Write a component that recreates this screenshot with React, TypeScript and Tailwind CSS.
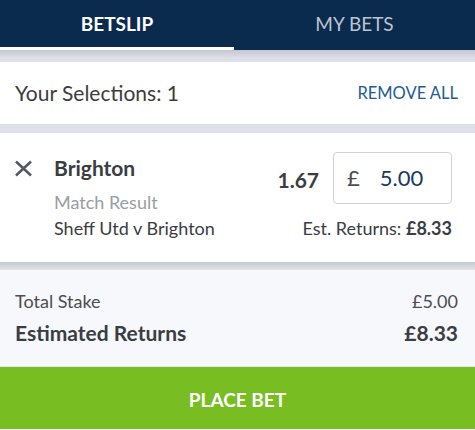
import React from "react";

export default function App() {
  return (
    <div className="w-[475px] h-[430px] overflow-hidden bg-white" style={{ fontFamily: "Lato, 'Noto Sans', sans-serif" }}>
      {/* Tabs */}
      <div className="flex h-[50px] bg-[#0a2a4e]">
        <div className="w-[234px] flex items-center justify-center border-b-[3px] border-white text-white font-bold text-[19px] leading-[24px]">
          BETSLIP
        </div>
        <div className="flex-1 flex items-center justify-center pb-[3px] text-[#bcc4d0] text-[19px] leading-[24px]">
          MY BETS
        </div>
      </div>
      <div className="h-[12px] bg-[linear-gradient(#c4c7d0,#dde0e8_70%,#dfe1ea)]" />
      {/* Selections header */}
      <div className="flex h-[62px] items-center justify-between pl-[15px] pr-[17px]">
        <span className="text-[21px] leading-[26px] text-[#3c3c3c]">Your Selections: 1</span>
        <span className="text-[16.5px] leading-[20px] text-[#1e5b96]">REMOVE ALL</span>
      </div>
      <div className="h-[9px] bg-[#dfe1ea]" />
      {/* Bet card */}
      <div className="flex h-[129px] items-start pt-[19px] pl-[14px] pr-[23px]">
        <div className="w-[40px] mt-[8px]">
          <svg width="19" height="17" viewBox="0 0 19 17">
            <path d="M2 1.5 L17 15.5 M17 1.5 L2 15.5" stroke="#555a60" strokeWidth="2.6" strokeLinecap="butt" />
          </svg>
        </div>
        <div className="flex-1 mt-[4px]">
          <div className="text-[21px] leading-[24px] font-bold text-[#3a3d42]">Brighton</div>
          <div className="mt-[9px] text-[18px] leading-[26px] text-[#9a9da2]">Match Result</div>
          <div className="text-[18px] leading-[26px] text-[#3a3d42]">Sheff Utd v Brighton</div>
        </div>
        <div className="flex flex-col items-end">
          <div className="flex items-center">
            <span className="text-[21px] leading-[26px] font-bold text-[#3a3d42] mr-[14px] mt-[4px]">1.67</span>
            <div className="w-[119px] h-[52px] rounded-[4px] border border-[#cfd2d8] flex items-center pl-[13px]">
              <span className="text-[22px] leading-[26px] text-[#4a4d52]">£</span>
              <span className="ml-[20px] text-[22px] leading-[26px] text-[#1b3a5e]">5.00</span>
            </div>
          </div>
          <div className="mt-[11px] text-[18px] leading-[26px] text-[#3a3d42]">
            Est. Returns: <span className="font-bold">£8.33</span>
          </div>
        </div>
      </div>
      <div className="h-[8px] bg-[linear-gradient(#c4c7cf,#d6d9e1_60%,#e3e5ec)]" />
      {/* Summary */}
      <div className="h-[97px] bg-[#f7f8fc] pt-[18px] pl-[15px] pr-[17px] border-b border-[#e4e6ea]">
        <div className="flex justify-between text-[18px] leading-[26px] text-[#4a4d52]">
          <span>Total Stake</span>
          <span>£5.00</span>
        </div>
        <div className="flex justify-between mt-[5px] text-[21px] leading-[28px] font-bold text-[#3a3d42]">
          <span>Estimated Returns</span>
          <span>£8.33</span>
        </div>
      </div>
      {/* Place bet */}
      <div className="h-[62px] bg-[#78bd21] flex justify-center pt-[21px]">
        <span className="text-[19px] leading-[24px] font-bold text-white">PLACE BET</span>
      </div>
    </div>
  );
}
